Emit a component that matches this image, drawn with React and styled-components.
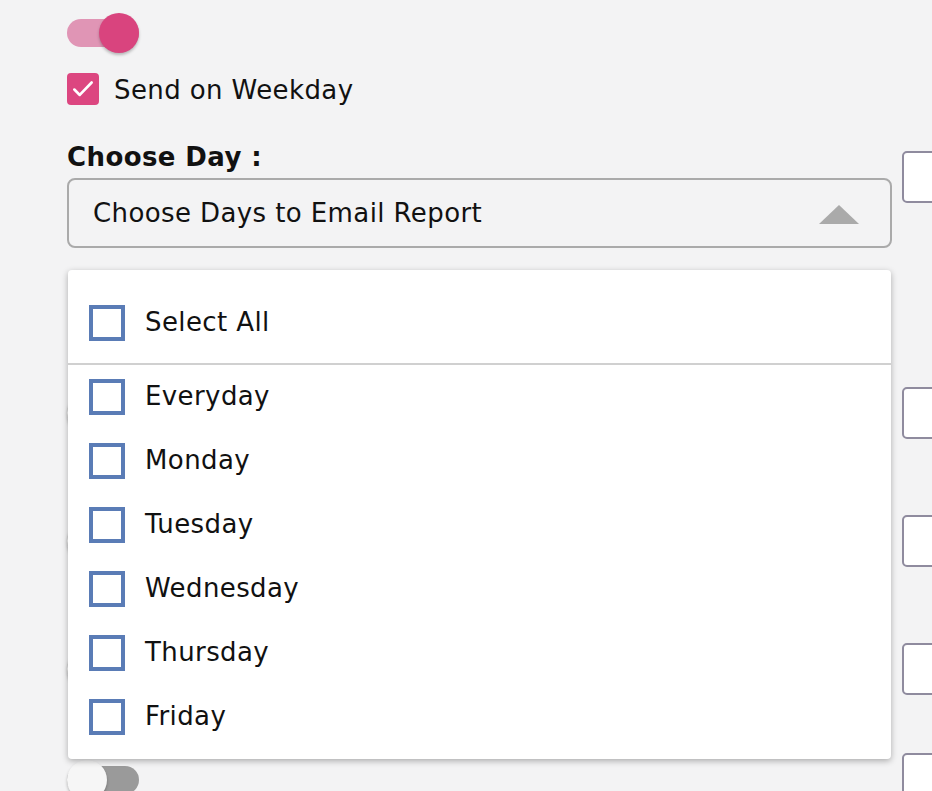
import React from "react";
import styled, { createGlobalStyle } from "styled-components";

const Global = createGlobalStyle`
  html, body { margin: 0; padding: 0; overflow: hidden; background: #f3f3f4; }
  body { font-family: "DejaVu Sans", "Liberation Sans", sans-serif; color: #111; letter-spacing: 0.4px; }
`;

const Page = styled.div`
  width: 932px;
  height: 791px;
  overflow: hidden;
  padding-left: 67px;
  box-sizing: border-box;
`;

const Section = styled.div`
  display: grid;
  grid-template-columns: 825px 200px;
  column-gap: 10px;
  align-items: ${(p) => p.$align || "start"};
  margin-top: ${(p) => p.$top || 0}px;
`;

const LeftCol = styled.div`
  display: flex;
  flex-direction: column;
`;

const Track = styled.div`
  position: relative;
  width: 72px;
  height: 28px;
  border-radius: 14px;
  background: ${(p) => (p.$on ? "#e095b5" : "#9a9a9a")};
`;

const Knob = styled.div`
  position: absolute;
  top: -6px;
  left: ${(p) => (p.$on ? "32px" : "0")};
  width: 40px;
  height: 40px;
  border-radius: 50%;
  background: ${(p) => (p.$on ? "#d9447e" : "#f6f6f6")};
  box-shadow: 0 2px 3px rgba(0, 0, 0, 0.25);
`;

const ToggleWrap = styled.div`
  width: 72px;
  height: 40px;
  display: flex;
  align-items: center;
`;

const Toggle = ({ on }) => (
  <ToggleWrap>
    <Track $on={on}>
      <Knob $on={on} />
    </Track>
  </ToggleWrap>
);

const TopToggle = styled.div`
  margin-top: 13px;
`;

const CheckRow = styled.label`
  display: flex;
  align-items: center;
  gap: 15px;
  margin-top: 20px;
  font-size: 26px;
  height: 32px;
`;

const CheckText = styled.span`
  margin-top: 2px;
`;

const PinkBox = styled.span`
  width: 32px;
  height: 32px;
  border-radius: 4px;
  background: #dc4680;
  display: flex;
  align-items: center;
  justify-content: center;
`;

const Label = styled.div`
  margin-top: 36px;
  font-size: 26px;
  font-weight: bold;
  line-height: 32px;
`;

const SelectWrap = styled.div`
  position: relative;
  margin-top: 5px;
`;

const SelectBox = styled.div`
  height: 70px;
  box-sizing: border-box;
  border: 2px solid #aaaaaa;
  border-radius: 8px;
  background: #f3f3f4;
  display: flex;
  align-items: center;
  justify-content: space-between;
  padding: 0 31px 0 24px;
  font-size: 26px;
`;

const Caret = styled.span`
  width: 0;
  height: 0;
  border-left: 20px solid transparent;
  border-right: 20px solid transparent;
  border-bottom: 19px solid #aaaaaa;
  margin-top: 2px;
`;

const Panel = styled.div`
  position: absolute;
  top: calc(100% + 22px);
  left: 1px;
  right: 1px;
  z-index: 10;
  background: #fff;
  border-radius: 4px;
  box-shadow: 0 2px 6px rgba(0, 0, 0, 0.3);
  padding-bottom: 10px;
`;

const AllRow = styled.div`
  padding: 21px 0 8px;
  border-bottom: 2px solid #d0d0d0;
`;

const Option = styled.div`
  display: flex;
  align-items: center;
  gap: 20px;
  height: 64px;
  padding-left: 21px;
  font-size: 26px;
`;

const OptionText = styled.span`
  margin-top: -2px;
`;

const BlueBox = styled.span`
  width: 36px;
  height: 36px;
  box-sizing: border-box;
  border: 4px solid #5a7cb6;
  background: #fff;
`;

const InputBox = styled.div`
  height: 52px;
  width: 200px;
  box-sizing: border-box;
  border: 2px solid #8f8b9e;
  border-radius: 5px;
  background: #fff;
  margin-top: ${(p) => p.$top || 0}px;
`;

const BottomToggle = styled.div`
  align-self: start;
  margin-top: 7px;
`;

const days = ["Everyday", "Monday", "Tuesday", "Wednesday", "Thursday", "Friday"];

export default function App() {
  return (
    <>
      <Global />
      <Page>
        <Section>
          <LeftCol>
            <TopToggle>
              <Toggle on />
            </TopToggle>
            <CheckRow>
              <PinkBox>
                <svg width="26" height="26" viewBox="0 0 24 24" fill="none" stroke="#fff" strokeWidth="2.4" strokeLinecap="round" strokeLinejoin="round">
                  <path d="M4 12.5l5 5L20 6" />
                </svg>
              </PinkBox>
              <CheckText>Send on Weekday</CheckText>
            </CheckRow>
            <Label>Choose Day :</Label>
            <SelectWrap>
              <SelectBox>
                Choose Days to Email Report
                <Caret />
              </SelectBox>
              <Panel>
                <AllRow>
                  <Option>
                    <BlueBox />
                    <OptionText>Select All</OptionText>
                  </Option>
                </AllRow>
                {days.map((d) => (
                  <Option key={d}>
                    <BlueBox />
                    <OptionText>{d}</OptionText>
                  </Option>
                ))}
              </Panel>
            </SelectWrap>
          </LeftCol>
          <InputBox $top={151} />
        </Section>
        <Section $top={139} $align="center">
          <Toggle />
          <InputBox />
        </Section>
        <Section $top={76} $align="center">
          <Toggle />
          <InputBox />
        </Section>
        <Section $top={76} $align="center">
          <Toggle />
          <InputBox />
        </Section>
        <Section $top={58}>
          <BottomToggle>
            <Toggle />
          </BottomToggle>
          <InputBox />
        </Section>
      </Page>
    </>
  );
}
